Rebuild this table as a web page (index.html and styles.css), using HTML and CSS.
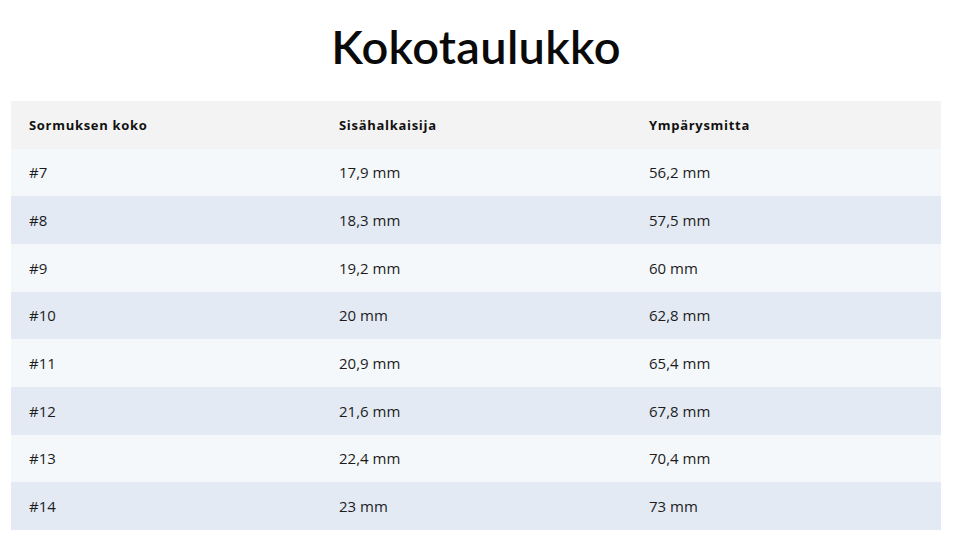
FILE: index.html
```html
<!DOCTYPE html>
<html lang="fi">
<head>
<meta charset="utf-8">
<title>Kokotaulukko</title>
<link rel="stylesheet" href="styles.css">
</head>
<body>
<main class="page">
  <h1 class="title">Kokotaulukko</h1>
  <table class="size-table">
    <thead>
      <tr><th>Sormuksen koko</th><th>Sisähalkaisija</th><th>Ympärysmitta</th></tr>
    </thead>
    <tbody>
      <tr><td>#7</td><td>17,9 mm</td><td>56,2 mm</td></tr>
      <tr><td>#8</td><td>18,3 mm</td><td>57,5 mm</td></tr>
      <tr><td>#9</td><td>19,2 mm</td><td>60 mm</td></tr>
      <tr><td>#10</td><td>20 mm</td><td>62,8 mm</td></tr>
      <tr><td>#11</td><td>20,9 mm</td><td>65,4 mm</td></tr>
      <tr><td>#12</td><td>21,6 mm</td><td>67,8 mm</td></tr>
      <tr><td>#13</td><td>22,4 mm</td><td>70,4 mm</td></tr>
      <tr><td>#14</td><td>23 mm</td><td>73 mm</td></tr>
    </tbody>
  </table>
</main>
</body>
</html>
```
FILE: styles.css
```css
html, body { margin: 0; padding: 0; background: #ffffff; }
body { font-family: "Open Sans", "Liberation Sans", sans-serif; color: #1c1c1c; }
.page { padding: 0 19px 0 11px; }
.title {
  margin: 0;
  height: 101px;
  box-sizing: border-box;
  padding-top: 20px;
  text-align: center;
  font-family: "Lato", "Liberation Sans", sans-serif;
  font-weight: 600;
  font-size: 47px;
  line-height: 52px;
  color: #0a0a0a;
  letter-spacing: 0.3px;
}
.size-table {
  width: 930px;
  border-collapse: collapse;
  table-layout: fixed;
}
.size-table th, .size-table td {
  width: 310px;
  height: 47.67px;
  padding: 0 0 0 18px;
  text-align: left;
  vertical-align: middle;
  box-sizing: border-box;
}
.size-table th {
  background: #f3f3f3;
  font-size: 13px;
  font-weight: 700;
  letter-spacing: 0.7px;
  color: #111111;
}
.size-table td { font-size: 15px; font-weight: 400; }
.size-table tbody tr:nth-child(odd) td { background: #f5f8fb; }
.size-table tbody tr:nth-child(even) td { background: #e3eaf4; }
```
